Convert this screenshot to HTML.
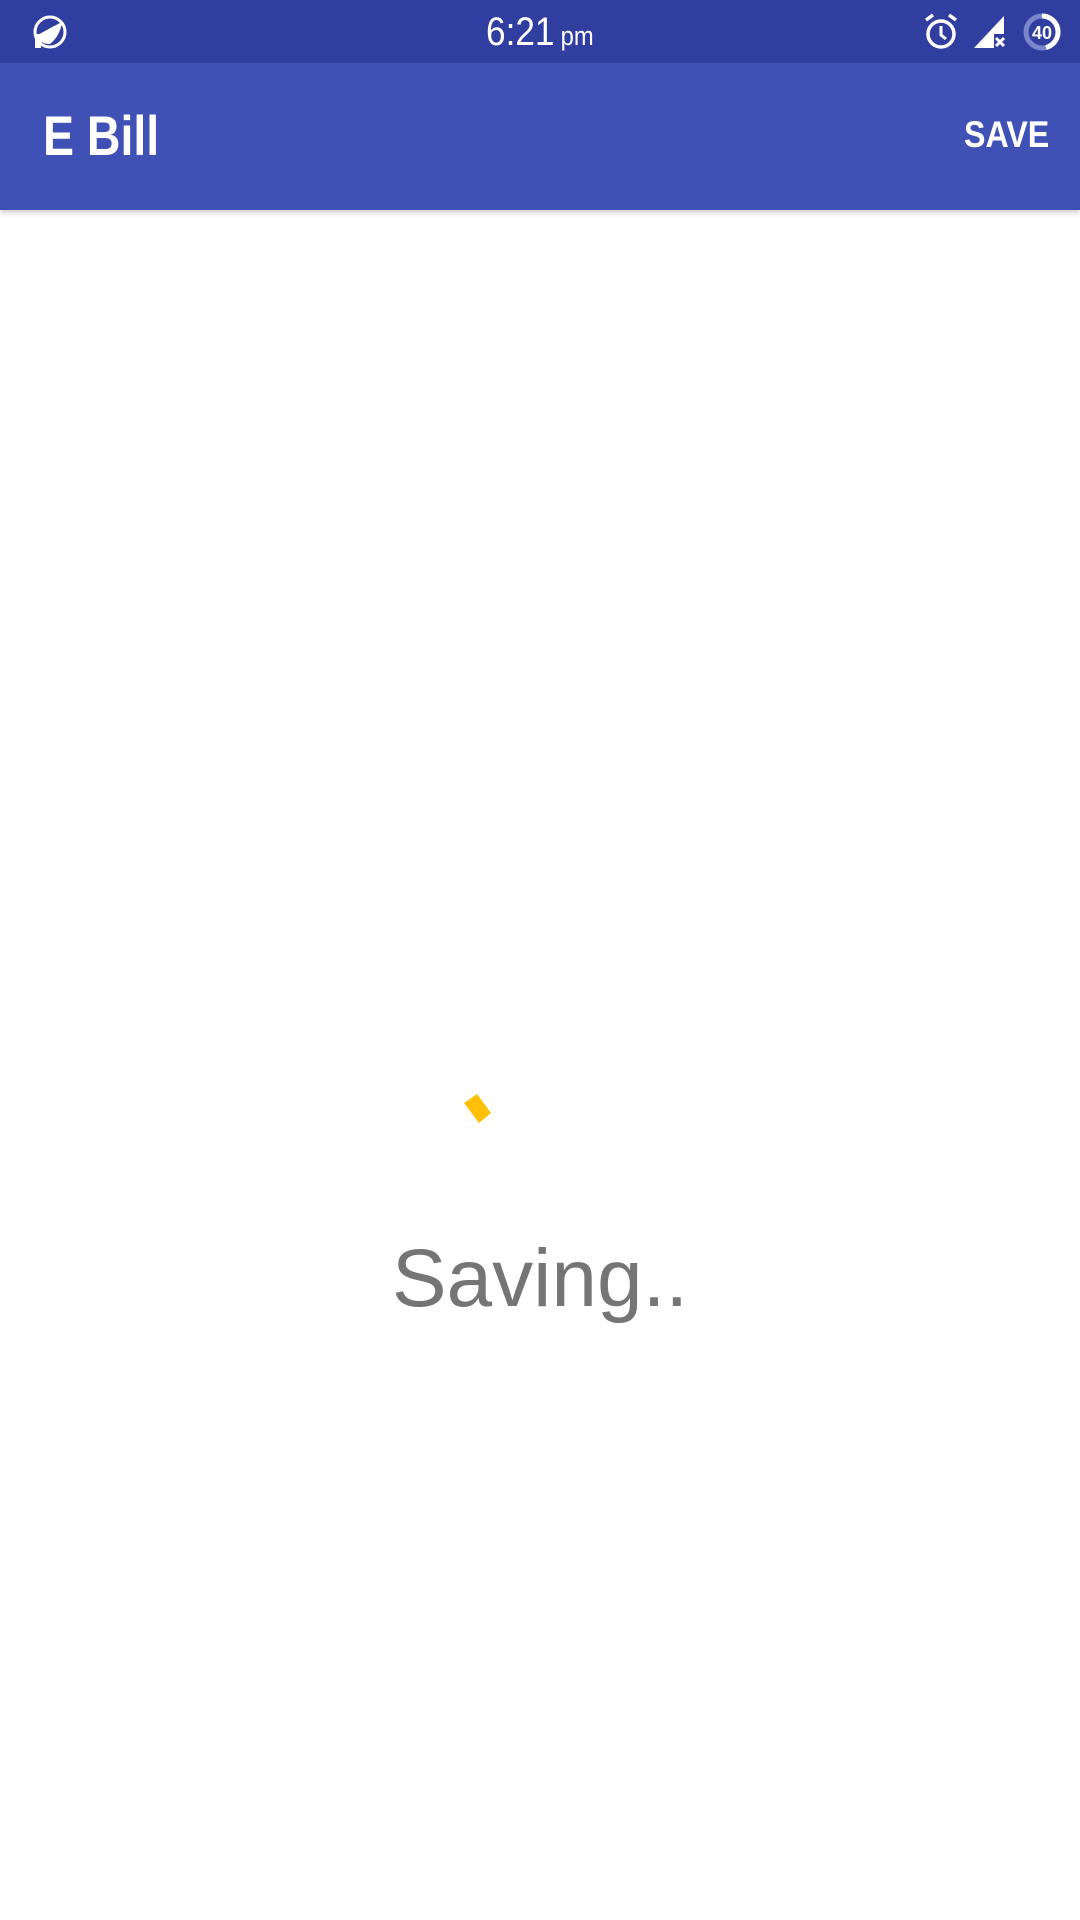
<!DOCTYPE html>
<html><head><meta charset="utf-8"><style>
body{margin:0;width:1080px;height:1920px;background:#fff;position:relative;overflow:hidden;font-family:"Liberation Sans",sans-serif}
.sb{position:absolute;left:0;top:0;width:1080px;height:63px;background:#303F9F}
.tb{position:absolute;left:0;top:63px;width:1080px;height:147px;background:#3F51B5;box-shadow:0 3px 5px rgba(0,0,0,0.18)}
.t{position:absolute;color:#fff;transform-origin:0 0;white-space:nowrap}
</style></head><body>
<div class="sb"></div>
<div class="tb"></div>
<svg style="position:absolute;left:32px;top:14px" width="36" height="36" viewBox="0 0 36 36"><circle cx="18" cy="18" r="15" fill="none" stroke="#fff" stroke-width="3"/><path d="M4 22 Q18 14 30 8 Q28 22 18 30 Q8 30 4 22Z" fill="#fff"/><rect x="3" y="20" width="6" height="14" fill="#fff"/></svg>
<div class="t" style="left:486px;top:10px;font-size:40px;transform:scaleX(0.88)">6:21<span style="font-size:27px;margin-left:7px">pm</span></div>
<svg style="position:absolute;left:922px;top:12px" width="38" height="40" viewBox="0 0 38 40"><circle cx="19" cy="22" r="13" fill="none" stroke="#fff" stroke-width="3.5"/><path d="M19 14v9l5 4" stroke="#fff" stroke-width="3" fill="none"/><path d="M4 8l7-5M34 8l-7-5" stroke="#fff" stroke-width="3.5"/></svg>
<svg style="position:absolute;left:972px;top:14px" width="36" height="36" viewBox="0 0 36 36"><path d="M2 34L32 2V20H22V34Z" fill="#fff"/><path d="M24 24l8 8M32 24l-8 8" stroke="#fff" stroke-width="3"/></svg>
<svg style="position:absolute;left:1022px;top:12px" width="40" height="40" viewBox="0 0 40 40"><circle cx="20" cy="20" r="16" fill="none" stroke="#7986CB" stroke-width="5"/><path d="M20 4A16 16 0 0 1 24 35.5" fill="none" stroke="#fff" stroke-width="5"/><text x="20" y="27" font-size="18" font-weight="bold" fill="#fff" text-anchor="middle" font-family="Liberation Sans">40</text></svg>
<div class="t" style="left:43px;top:103px;font-size:56px;font-weight:bold;transform:scaleX(0.83)">E Bill</div>
<div class="t" style="left:964px;top:114px;font-size:37px;font-weight:bold;transform:scaleX(0.87)">SAVE</div>
<svg style="position:absolute;left:0;top:0" width="1080" height="1920"><polygon points="464,1103 477,1094 491,1113 479,1123" fill="#FFC107"/></svg>
<div style="position:absolute;left:0;width:1080px;top:1232px;text-align:center;font-size:82px;color:#757575">Saving..</div>
</body></html>
